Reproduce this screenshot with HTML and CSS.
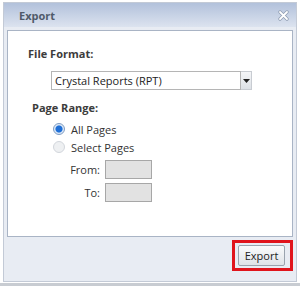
FILE: index.html
```html
<!DOCTYPE html>
<html lang="en">
<head>
    <meta charset="UTF-8">
    <title>Export</title>
    <link rel="stylesheet" href="styles.css">
</head>
<body>
    <div class="dialog">
        <div class="titlebar">
            <span class="title">Export</span>
            <svg class="close" width="11" height="11" viewBox="0 0 11 11">
                <path d="M2 2l7 7M9 2l-7 7" stroke="#8d9bb0" stroke-width="3.2" stroke-linecap="round"/>
                <path d="M2 2l7 7M9 2l-7 7" stroke="#ffffff" stroke-width="1.8" stroke-linecap="round"/>
            </svg>
        </div>

        <div class="panel">
            <div class="label">File Format:</div>
            <div class="select">
                <span class="select-value">Crystal Reports (RPT)</span>
                <span class="select-btn">
                    <svg width="7" height="4" viewBox="0 0 7 4"><path d="M0 0h7L3.5 4z" fill="#222"/></svg>
                </span>
            </div>

            <div class="label range">Page Range:</div>
            <div class="radios">
                <div class="radio-row">
                    <span class="radio checked"></span>
                    <span>All Pages</span>
                </div>
                <div class="radio-row">
                    <span class="radio"></span>
                    <span>Select Pages</span>
                </div>
            </div>

            <div class="field-row">
                <span class="field-label">From:</span>
                <span class="field"></span>
            </div>
            <div class="field-row">
                <span class="field-label">To:</span>
                <span class="field"></span>
            </div>
        </div>

        <div class="footer">
            <div class="highlight">
                <button class="btn">Export</button>
            </div>
        </div>
    </div>
    <div class="under"></div>
</body>
</html>
```

FILE: styles.css
```css
body {
    margin: 0;
    background: #ffffff;
    font-family: "Open Sans", "DejaVu Sans", sans-serif;
    font-size: 11px;
    color: #333;
    overflow: hidden;
}

.dialog {
    margin: 2px 0 0 3px;
    width: 294px;
    height: 280px;
    background: #e8ecf3;
    border: 1px solid #c3cad6;
    box-sizing: border-box;
}

.titlebar {
    display: flex;
    align-items: center;
    justify-content: space-between;
    height: 24px;
    padding: 0 7px 0 15px;
    background: linear-gradient(#b2c1db, #dce3ef);
}

.title {
    font-weight: bold;
    font-size: 11px;
    color: #4f5a6a;
}

.panel {
    margin: 3px 3px 0 3px;
    height: 207px;
    background: #ffffff;
    border: 1px solid #a9b4c5;
    box-sizing: border-box;
    padding: 15px 0 0 20px;
}

.label {
    font-weight: bold;
    color: #3c3c3c;
    height: 16px;
    line-height: 16px;
}

.label.range {
    margin: 10px 0 0 4px;
}

.select {
    display: flex;
    margin: 9px 0 0 23px;
    width: 201px;
    height: 19px;
}

.select-value {
    flex: 1;
    border: 1px solid #b5b5b5;
    line-height: 17px;
    padding-left: 3px;
    font-size: 11px;
    color: #222;
}

.select-btn {
    width: 10px;
    display: flex;
    align-items: center;
    justify-content: center;
    background: linear-gradient(#f4f5f7, #dde1e6);
    border: 1px solid #c8ccd2;
    border-left: none;
}

.radios {
    margin: 4px 0 0 25px;
}

.radio-row {
    display: flex;
    align-items: center;
    gap: 6px;
    height: 18px;
    color: #333;
}

.radio {
    width: 10px;
    height: 10px;
    border-radius: 50%;
    border: 1px solid #d2d6dc;
    background: #eef0f2;
}

.radio.checked {
    border-color: #7f9cc2;
    background: radial-gradient(circle, #1f6fd6 0 3px, #6ea4e8 3.5px, #dde8f6 4px);
}

.field-row {
    display: flex;
    align-items: center;
    justify-content: flex-end;
    width: 124px;
    gap: 5px;
    margin-top: 4px;
}

.field-label {
    color: #333;
}

.field {
    width: 45px;
    height: 17px;
    background: #e2e2e2;
    border: 1px solid #a7a7a7;
}

.footer {
    display: flex;
    justify-content: flex-end;
    padding: 3px 3px 0 0;
}

.highlight {
    border: 3px solid #e0141c;
    padding: 2px 5px 2px 3px;
}

.btn {
    width: 47px;
    height: 21px;
    font-family: inherit;
    font-size: 11px;
    color: #222;
    background: linear-gradient(#fafbfc, #dfe3e8);
    border: 1px solid #9aa3ae;
    border-radius: 2px;
    padding: 0;
}

.under {
    height: 3px;
    margin-top: 1px;
    background: #c8ccd2;
}
```
